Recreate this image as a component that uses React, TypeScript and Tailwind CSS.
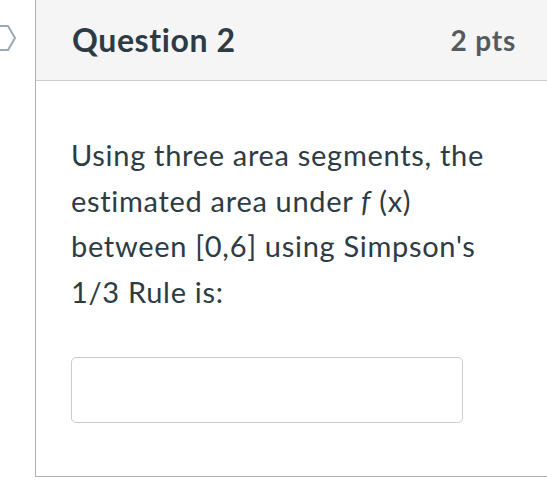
import React from "react";

function FlagIcon() {
  return (
    <svg width="20" height="28" viewBox="0 0 20 28" className="mt-[24px] -ml-[3px] shrink-0">
      <path
        d="M0 2 H11 L18 14 L11 26 H0 Z"
        fill="#ffffff"
        stroke="#9aa9b5"
        strokeWidth="2"
        strokeLinejoin="round"
      />
    </svg>
  );
}

export default function App() {
  return (
    <div
      className="w-[547px] h-[494px] bg-white flex overflow-hidden [font-variant-ligatures:none]"
      style={{ fontFamily: "Lato, 'Open Sans', sans-serif" }}
    >
      <div className="w-[35px] shrink-0 flex">
        <FlagIcon />
      </div>
      <div className="flex-1 h-[477px] border-l border-b border-[#b0b0b0] flex flex-col">
        <div className="h-[81px] bg-[#f5f5f5] border-b border-[#c7cdd1] flex items-center justify-between pl-[36px] pr-[31px]">
          <h2 className="text-[32px] tracking-[0.6px] font-bold text-[#2d3b45] leading-none">Question 2</h2>
          <span className="text-[28px] tracking-[0.8px] font-bold text-[#555a5e] leading-none">2 pts</span>
        </div>
        <div className="pl-[35px] pr-[40px] pt-[51px]">
          <p className="text-[29px] tracking-[0.7px] leading-[45.7px] text-[#2d3b45]">
            Using three area segments, the estimated area under <i>f</i> (x) between [0,6] using Simpson's 1/3 Rule is:
          </p>
          <input
            type="text"
            className="mt-[42px] w-[392px] h-[66px] border border-[#c7cdd1] rounded-[5px] bg-white outline-none"
          />
        </div>
      </div>
    </div>
  );
}
